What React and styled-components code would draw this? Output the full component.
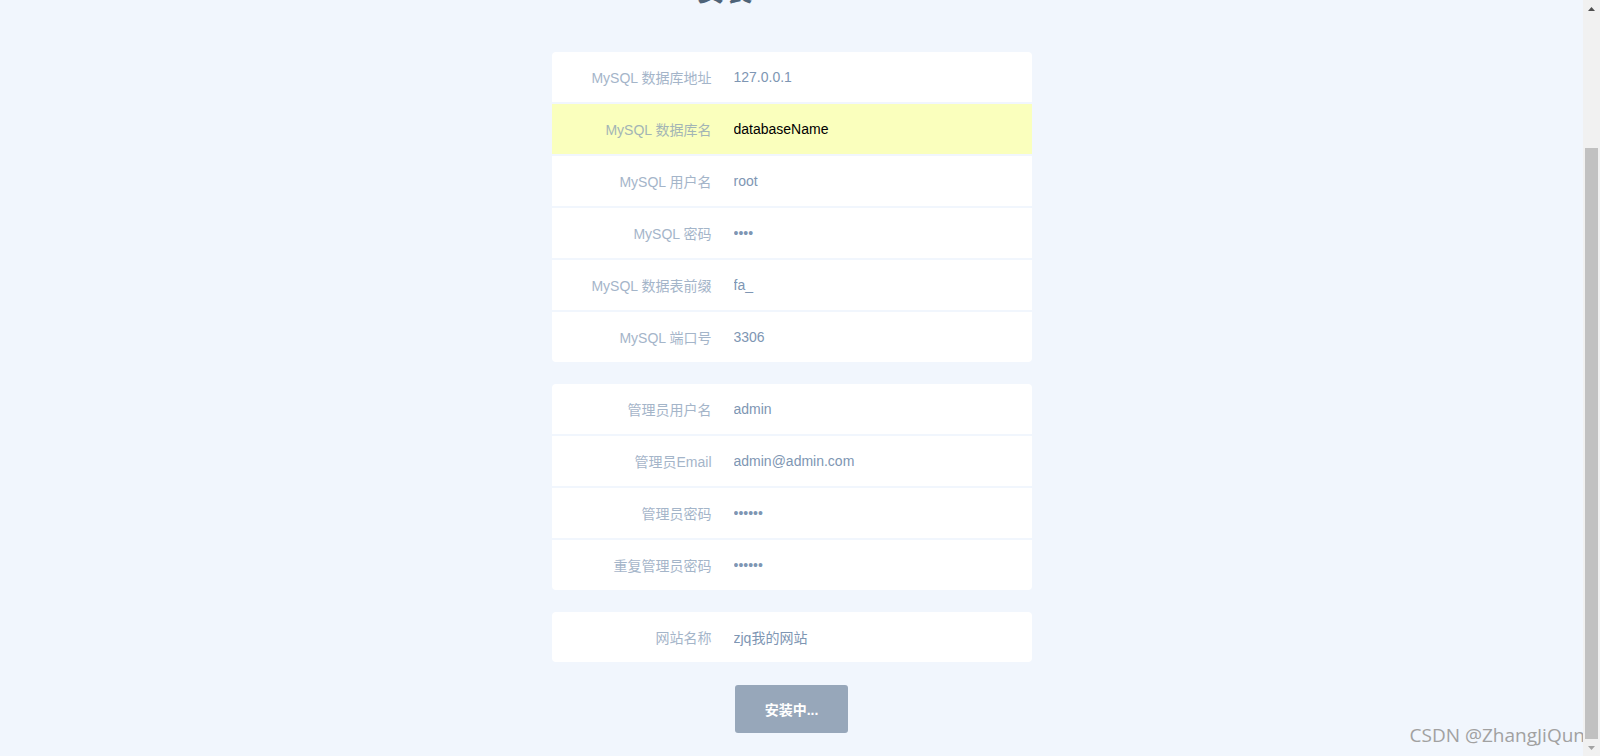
import React from 'react';
import styled, { createGlobalStyle } from 'styled-components';

const GlobalStyle = createGlobalStyle`
    html, body {
        margin: 0;
        padding: 0;
        height: 100%;
        overflow: hidden;
        background: #f1f6fd;
    }
    body, input, button {
        font-family: "Liberation Sans", Arial, "Noto Sans CJK SC", sans-serif;
        font-size: 14px;
        color: #7e96b3;
    }
`;

const Screen = styled.div`
    display: flex;
    height: 756px;
    position: relative;
`;

const Main = styled.main`
    flex: 1;
    overflow: hidden;
    display: flex;
    flex-direction: column;
    align-items: center;
`;

const Title = styled.h1`
    margin: -24px 0 0;
    padding-right: 134px;
    height: 32px;
    line-height: 32px;
    font-size: 28px;
    font-weight: bold;
    color: #4e6378;
`;

const Form = styled.form`
    width: 480px;
    margin-top: 44px;
    display: flex;
    flex-direction: column;
    gap: 22px;
`;

const Fieldset = styled.div`
    display: flex;
    flex-direction: column;
    gap: 2px;
    border-radius: 4px;
    overflow: hidden;
`;

const Field = styled.div`
    display: flex;
    align-items: center;
    height: 50px;
    background: ${(props) => (props.autofill ? 'rgb(250, 255, 189)' : '#fff')};
`;

const Label = styled.label`
    width: 160px;
    flex-shrink: 0;
    text-align: right;
    opacity: 0.7;
    color: #7e96b3;
`;

const Input = styled.input`
    flex: 1;
    border: none;
    outline: none;
    background: transparent;
    margin-left: 22px;
    padding: 0;
    height: 20px;
    color: ${(props) => (props.autofill ? '#000' : '#7e96b3')};
`;

const Buttons = styled.div`
    display: flex;
    justify-content: center;
    margin-top: 1px;
`;

const Button = styled.button`
    width: 113px;
    height: 48px;
    border: none;
    border-radius: 3px;
    background: #97a7ba;
    color: #fff;
    font-weight: bold;
    font-size: 14px;
`;

const Scrollbar = styled.div`
    width: 17px;
    flex-shrink: 0;
    background: #f1f1f1;
    display: flex;
    flex-direction: column;
    align-items: center;
    z-index: 2;
`;

const Arrow = styled.div`
    height: 17px;
    width: 17px;
    display: flex;
    align-items: center;
    justify-content: center;
    svg { fill: ${(props) => (props.dim ? '#a3a3a3' : '#505050')}; }
`;

const Track = styled.div`
    flex: 1;
    width: 100%;
    display: flex;
    flex-direction: column;
    justify-content: flex-end;
    align-items: center;
`;

const Thumb = styled.div`
    width: 13px;
    height: 591px;
    background: #c1c1c1;
`;

const Watermark = styled.div`
    position: absolute;
    right: 10px;
    bottom: 8px;
    font-family: "Open Sans", "Liberation Sans", sans-serif;
    font-size: 19px;
    color: #a1a1a1;
    z-index: 1;
`;

const dbFields = [
    { label: 'MySQL 数据库地址', value: '127.0.0.1' },
    { label: 'MySQL 数据库名', value: 'databaseName', autofill: true },
    { label: 'MySQL 用户名', value: 'root' },
    { label: 'MySQL 密码', value: 'root', type: 'password' },
    { label: 'MySQL 数据表前缀', value: 'fa_' },
    { label: 'MySQL 端口号', value: '3306' },
];

const adminFields = [
    { label: '管理员用户名', value: 'admin' },
    { label: '管理员Email', value: 'admin@admin.com' },
    { label: '管理员密码', value: '123456', type: 'password' },
    { label: '重复管理员密码', value: '123456', type: 'password' },
];

const siteFields = [{ label: '网站名称', value: 'zjq我的网站' }];

const Group = ({ fields }) => (
    <Fieldset>
        {fields.map((f) => (
            <Field key={f.label} autofill={f.autofill}>
                <Label>{f.label}</Label>
                <Input
                    type={f.type || 'text'}
                    defaultValue={f.value}
                    autofill={f.autofill}
                    readOnly
                />
            </Field>
        ))}
    </Fieldset>
);

export default function App() {
    return (
        <Screen>
            <GlobalStyle />
            <Main>
                <Title>安装</Title>
                <Form onSubmit={(e) => e.preventDefault()}>
                    <Group fields={dbFields} />
                    <Group fields={adminFields} />
                    <Group fields={siteFields} />
                    <Buttons>
                        <Button type="button">安装中...</Button>
                    </Buttons>
                </Form>
            </Main>
            <Watermark>CSDN @ZhangJiQun.</Watermark>
            <Scrollbar>
                <Arrow>
                    <svg width="7" height="4" viewBox="0 0 7 4"><path d="M0 4 L3.5 0 L7 4 Z" /></svg>
                </Arrow>
                <Track>
                    <Thumb />
                </Track>
                <Arrow dim>
                    <svg width="7" height="4" viewBox="0 0 7 4"><path d="M0 0 L3.5 4 L7 0 Z" /></svg>
                </Arrow>
            </Scrollbar>
        </Screen>
    );
}
